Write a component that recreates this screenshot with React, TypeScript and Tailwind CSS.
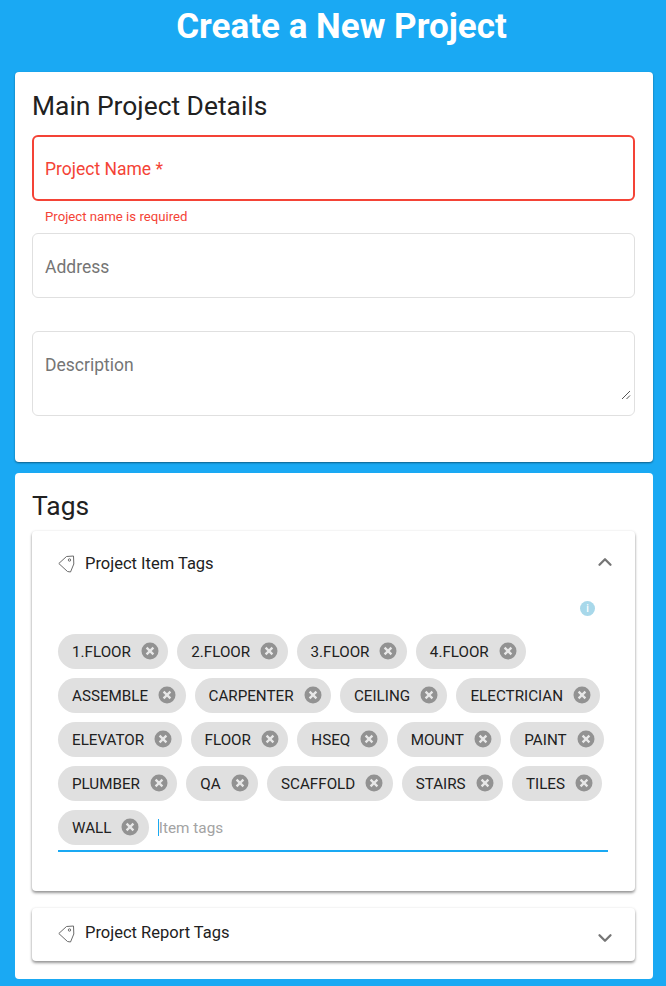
import { ChevronUp, ChevronDown } from 'lucide-react';

const itemTags = [
  '1.FLOOR', '2.FLOOR', '3.FLOOR', '4.FLOOR',
  'ASSEMBLE', 'CARPENTER', 'CEILING', 'ELECTRICIAN',
  'ELEVATOR', 'FLOOR', 'HSEQ', 'MOUNT', 'PAINT',
  'PLUMBER', 'QA', 'SCAFFOLD', 'STAIRS', 'TILES',
  'WALL',
];

function TagIcon() {
  return (
    <svg width="18" height="20" viewBox="0 0 18 20" fill="none" stroke="#6b6b6b" strokeWidth="1" className="mt-[2px] shrink-0">
      <path d="M0.8 9.5 L8.5 2.5 L15.5 2 L15.8 10 L12.5 18 L9.5 17.5 Z" strokeLinejoin="round" />
      <circle cx="11.5" cy="6" r="1.2" />
    </svg>
  );
}

function Chip({ label }: { label: string }) {
  return (
    <div className="flex h-[35px] items-center rounded-full bg-[#e0e0e0] pl-[14px] pr-[8.4px] text-[15.2px] text-[#212121]">
      <span className="translate-y-px">{label}</span>
      <svg width="20" height="20" viewBox="0 0 20 20" className="ml-[9px] mb-[2px]">
        <circle cx="10" cy="10" r="8.5" fill="#929292" />
        <path d="M6.6 6.6 L13.4 13.4 M13.4 6.6 L6.6 13.4" stroke="#e8e8e8" strokeWidth="2.3" />
      </svg>
    </div>
  );
}

export default function App() {
  return (
    <div className="h-[986px] overflow-hidden bg-[#1aa9f3] pl-[15px] pr-[13px] font-['Roboto',sans-serif]">
      <h1 className="ml-[15px] h-[72px] pt-[6px] text-center text-[35px] font-bold leading-[42px] text-white">
        Create a New Project
      </h1>

      {/* Main details */}
      <section className="h-[390px] rounded bg-white pl-[17px] pr-[18px] pt-[17px] shadow-[0_1px_2px_rgba(0,0,0,0.45)]">
        <h2 className="h-[46px] text-[26.4px] leading-[34px] text-[#212121]">Main Project Details</h2>
        <div className="flex h-[66px] items-center rounded-md border-2 border-[#f44336] pl-[11px] pt-[2px] text-[17.5px] text-[#f44336]">
          Project Name *
        </div>
        <p className="ml-[13px] mt-[8px] h-[24px] text-[13.2px] leading-[16px] text-[#f44336]">Project name is required</p>
        <div className="flex h-[65px] items-center rounded-md border border-[#e0e0e0] pl-[12px] pt-[3px] text-[17.5px] text-[#757575]">
          Address
        </div>
        <div className="relative mt-[33px] h-[85px] rounded-md border border-[#e0e0e0] pl-[12px] pt-[21px] text-[17.5px] leading-6 text-[#757575]">
          Description
          <svg width="10" height="10" viewBox="0 0 10 10" stroke="#555" strokeWidth="1" className="absolute bottom-[15px] right-[3px]">
            <path d="M1 9 L9 1 M5.5 9 L9 5.5" />
          </svg>
        </div>
      </section>

      {/* Tags */}
      <section className="mt-[11px] h-[506px] rounded bg-white pl-[17px] pr-[18px] pt-[16px]">
        <h2 className="h-[42px] text-[26.4px] leading-[34px] text-[#212121]">Tags</h2>

        <div className="h-[360px] rounded bg-white px-[26px] shadow-[0_2px_3px_rgba(0,0,0,0.4),0_0_3px_rgba(0,0,0,0.08)]">
          <div className="flex h-[64px] items-center">
            <TagIcon />
            <span className="ml-[9px] flex-1 translate-y-px text-[16.5px] text-[#212121]">Project Item Tags</span>
            <ChevronUp size={22} strokeWidth={2.5} className="mr-[-7px] mb-[2px] text-[#757575]" />
          </div>
          <div className="flex h-[39px] justify-end pr-[14px] pt-[6px]">
            <div className="flex h-[15px] w-[15px] items-center justify-center rounded-full bg-[#a8d8ea] text-[10px] font-medium text-white">
              i
            </div>
          </div>
          <div className="flex w-[550px] flex-wrap gap-x-[9px] gap-y-[9px] border-b-2 border-[#1aa9f3] pb-[5px]">
            {itemTags.map((t) => (
              <Chip key={t} label={t} />
            ))}
            <div className="flex h-[35px] items-center text-[15.3px] text-[#a3a3a3]">
              <span className="h-[17px] w-px bg-[#1aa9f3]" />
              <span className="translate-y-px">Item tags</span>
            </div>
          </div>
        </div>

        <div className="mt-[17px] flex h-[53px] items-center rounded bg-white px-[26px] pb-[3px] shadow-[0_2px_3px_rgba(0,0,0,0.4),0_0_3px_rgba(0,0,0,0.08)]">
          <TagIcon />
          <span className="ml-[9px] flex-1 text-[16.5px] text-[#212121]">Project Report Tags</span>
          <ChevronDown size={22} strokeWidth={2.5} className="mr-[-7px] mt-[10px] text-[#757575]" />
        </div>
      </section>
    </div>
  );
}
